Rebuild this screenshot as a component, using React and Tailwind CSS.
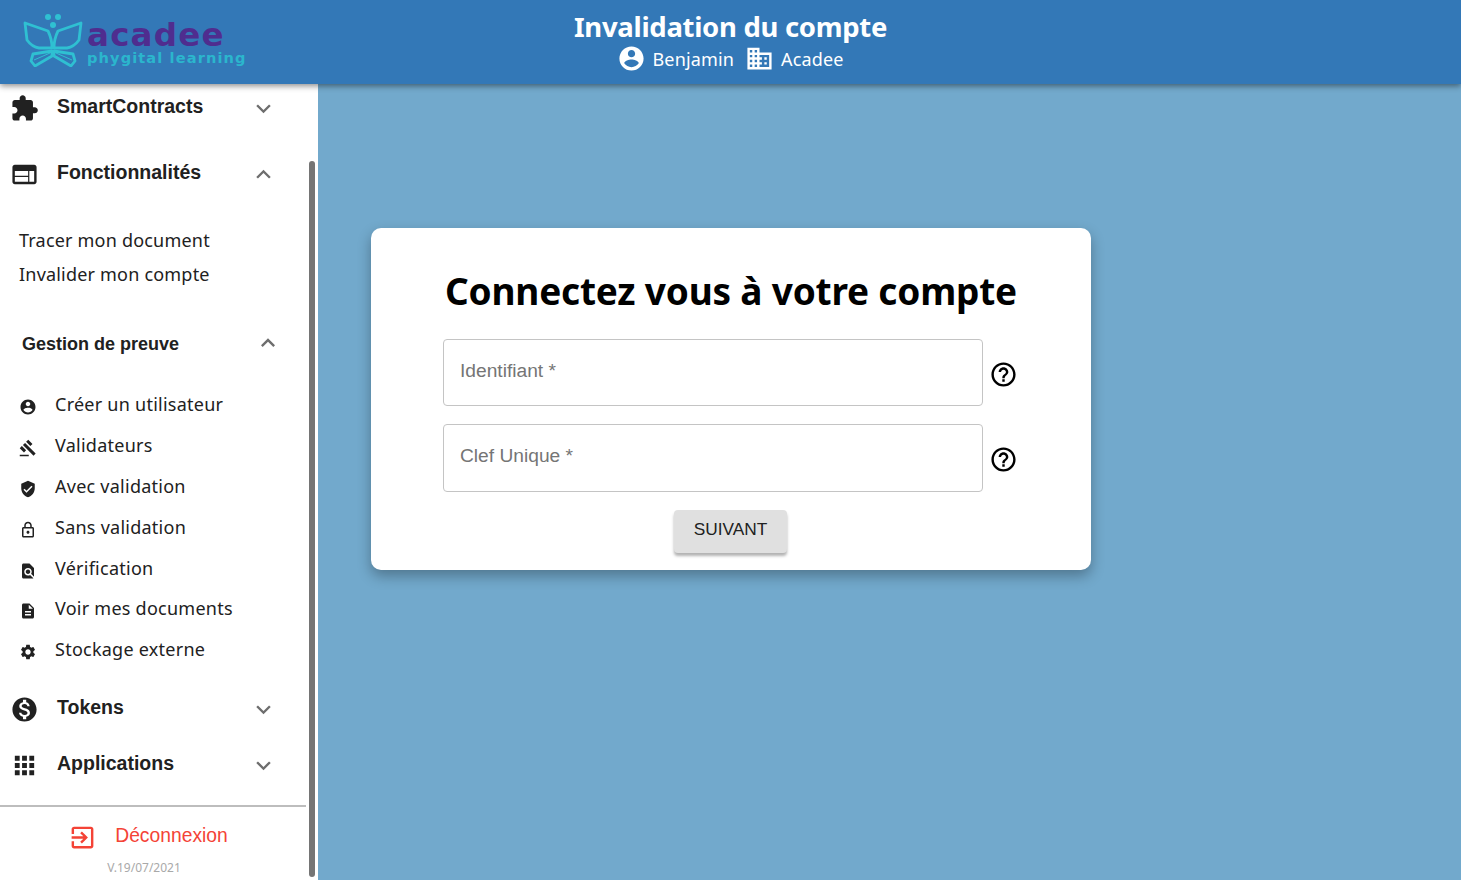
import React from 'react';

const icons = {
  extension: 'M20.5 11H19V7c0-1.1-.9-2-2-2h-4V3.5C13 2.12 11.88 1 10.5 1S8 2.12 8 3.5V5H4c-1.1 0-1.99.9-1.99 2v3.8H3.5c1.49 0 2.7 1.21 2.7 2.7s-1.21 2.7-2.7 2.7H2V20c0 1.1.9 2 2 2h3.8v-1.5c0-1.49 1.21-2.7 2.7-2.7 1.49 0 2.7 1.21 2.7 2.7V22H17c1.1 0 2-.9 2-2v-4h1.5c1.38 0 2.5-1.12 2.5-2.5S21.88 11 20.5 11z',
  web: 'M20 4H4c-1.1 0-1.99.9-1.99 2L2 18c0 1.1.9 2 2 2h16c1.1 0 2-.9 2-2V6c0-1.1-.9-2-2-2zm-5 14H4v-4h11v4zm0-5H4V9h11v4zm5 5h-4V9h4v9z',
  more: 'M16.59 8.59L12 13.17 7.41 8.59 6 10l6 6 6-6z',
  less: 'M12 8l-6 6 1.41 1.41L12 10.83l4.59 4.58L18 14z',
  account: 'M12 2C6.48 2 2 6.48 2 12s4.48 10 10 10 10-4.48 10-10S17.52 2 12 2zm0 3c1.66 0 3 1.34 3 3s-1.34 3-3 3-3-1.34-3-3 1.34-3 3-3zm0 14.2c-2.5 0-4.71-1.28-6-3.22.03-1.99 4-3.08 6-3.08 1.99 0 5.97 1.09 6 3.08-1.29 1.94-3.5 3.22-6 3.22z',
  gavel: 'M1 21h12v2H1zM5.245 8.07l2.83-2.827 14.14 14.142-2.828 2.828zM12.317 1l5.657 5.656-2.83 2.83-5.654-5.66zM3.825 9.485l5.657 5.657-2.828 2.828-5.657-5.657z',
  verified: 'M12 1L3 5v6c0 5.55 3.84 10.74 9 12 5.16-1.26 9-6.45 9-12V5l-9-4zm-2 16l-4-4 1.41-1.41L10 14.17l6.59-6.59L18 9l-8 8z',
  lock: 'M18 8h-1V6c0-2.76-2.24-5-5-5S7 3.24 7 6v2H6c-1.1 0-2 .9-2 2v10c0 1.1.9 2 2 2h12c1.1 0 2-.9 2-2V10c0-1.1-.9-2-2-2zM9 6c0-1.66 1.34-3 3-3s3 1.34 3 3v2H9V6zm9 14H6V10h12v10zm-6-3c1.1 0 2-.9 2-2s-.9-2-2-2-2 .9-2 2 .9 2 2 2z',
  find: 'M20 19.59V8l-6-6H6c-1.1 0-1.99.9-1.99 2L4 20c0 1.1.89 2 1.99 2H18c.45 0 .85-.15 1.19-.4l-4.43-4.43c-.8.52-1.74.83-2.76.83-2.76 0-5-2.24-5-5s2.24-5 5-5 5 2.24 5 5c0 1.02-.31 1.96-.83 2.75L20 19.59zM9 13c0 1.66 1.34 3 3 3s3-1.34 3-3-1.34-3-3-3-3 1.34-3 3z',
  description: 'M14 2H6c-1.1 0-1.99.9-1.99 2L4 20c0 1.1.89 2 1.99 2H18c1.1 0 2-.9 2-2V8l-6-6zm2 16H8v-2h8v2zm0-4H8v-2h8v2zm-3-5V3.5L18.5 9H13z',
  settings: 'M19.14 12.94c.04-.3.06-.61.06-.94 0-.32-.02-.64-.07-.94l2.03-1.58c.18-.14.23-.41.12-.61l-1.92-3.32c-.12-.22-.37-.29-.59-.22l-2.39.96c-.5-.38-1.03-.7-1.62-.94l-.36-2.54c-.04-.24-.24-.41-.48-.41h-3.84c-.24 0-.43.17-.47.41l-.36 2.54c-.59.24-1.13.57-1.62.94l-2.39-.96c-.22-.08-.47 0-.59.22L2.74 8.87c-.12.21-.08.47.12.61l2.03 1.58c-.05.3-.09.63-.09.94s.02.64.07.94l-2.03 1.58c-.18.14-.23.41-.12.61l1.92 3.32c.12.22.37.29.59.22l2.39-.96c.5.38 1.03.7 1.62.94l.36 2.54c.05.24.24.41.48.41h3.84c.24 0 .44-.17.47-.41l.36-2.54c.59-.24 1.13-.56 1.62-.94l2.39.96c.22.08.47 0 .59-.22l1.92-3.32c.12-.22.07-.47-.12-.61l-2.01-1.58zM12 15.6c-1.98 0-3.6-1.62-3.6-3.6s1.62-3.6 3.6-3.6 3.6 1.62 3.6 3.6-1.62 3.6-3.6 3.6z',
  money: 'M12 2C6.48 2 2 6.48 2 12s4.48 10 10 10 10-4.48 10-10S17.52 2 12 2zm1.41 16.09V20h-2.67v-1.93c-1.71-.36-3.16-1.46-3.27-3.4h1.96c.1 1.05.82 1.87 2.65 1.87 1.96 0 2.4-.98 2.4-1.59 0-.83-.44-1.61-2.67-2.14-2.48-.6-4.18-1.62-4.18-3.67 0-1.72 1.39-2.84 3.11-3.21V4h2.67v1.95c1.86.45 2.79 1.86 2.85 3.39H14.3c-.05-1.11-.64-1.87-2.22-1.87-1.5 0-2.4.68-2.4 1.64 0 .84.65 1.39 2.67 1.91s4.18 1.39 4.18 3.91c-.01 1.83-1.38 2.83-3.12 3.16z',
  apps: 'M4 8h4V4H4v4zm6 12h4v-4h-4v4zm-6 0h4v-4H4v4zm0-6h4v-4H4v4zm6 0h4v-4h-4v4zm6-10v4h4V4h-4zm-6 4h4V4h-4v4zm6 6h4v-4h-4v4zm0 6h4v-4h-4v4z',
  exit: 'M10.09 15.59L11.5 17l5-5-5-5-1.41 1.41L12.67 11H3v2h9.67l-2.58 2.59zM19 3H5c-1.11 0-2 .9-2 2v4h2V5h14v14H5v-4H3v4c0 1.1.89 2 2 2h14c1.1 0 2-.9 2-2V5c0-1.1-.9-2-2-2z',
  help: 'M11 18h2v-2h-2v2zm1-16C6.48 2 2 6.48 2 12s4.48 10 10 10 10-4.48 10-10S17.52 2 12 2zm0 18c-4.41 0-8-3.59-8-8s3.59-8 8-8 8 3.59 8 8-3.59 8-8 8zm0-14c-2.21 0-4 1.79-4 4h2c0-1.1.9-2 2-2s2 .9 2 2c0 2-3 1.75-3 5h2c0-2.25 3-2.5 3-5 0-2.21-1.79-4-4-4z',
  domain: 'M12 7V3H2v18h20V7H12zM6 19H4v-2h2v2zm0-4H4v-2h2v2zm0-4H4V9h2v2zm0-4H4V5h2v2zm4 12H8v-2h2v2zm0-4H8v-2h2v2zm0-4H8V9h2v2zm0-4H8V5h2v2zm10 12h-8v-2h2v-2h-2v-2h2v-2h-2V9h8v10zm-2-8h-2v2h2v-2zm0 4h-2v2h2v-2z',
};

function Icon({ name, className }) {
  return (
    <svg viewBox="0 0 24 24" fill="currentColor" className={className}>
      <path d={icons[name]} />
    </svg>
  );
}

function Logo() {
  return (
    <div className="flex items-start ml-[23px] mt-[13px]">
      <svg viewBox="0 0 60 54" className="w-[60px] h-[54px] shrink-0" fill="none" stroke="#2fc0d2" strokeWidth="2.8" strokeLinejoin="round">
        <circle cx="25" cy="4" r="3" fill="#2fc0d2" stroke="none" />
        <circle cx="35" cy="4" r="3" fill="#2fc0d2" stroke="none" />
        <circle cx="30" cy="12" r="3" fill="#2fc0d2" stroke="none" />
        <path d="M2 10 L25 18 Q29 26 29 35 L16 35 Q9 34 4 27 Z" />
        <path d="M58 10 L35 18 Q31 26 31 35 L44 35 Q51 34 56 27 Z" />
        <path d="M29 38 L10 41 L8 48 L12 53 L29 43 Z" />
        <path d="M31 38 L50 41 L52 48 L48 53 L31 43 Z" />
        <path d="M11 47 L27 40 M49 47 L33 40" strokeWidth="1" />
      </svg>
      <div className="ml-[4px] pt-[7px]">
        <div className="font-['DejaVu_Sans'] font-bold text-[32.5px] leading-[30px] tracking-[1.2px] text-[#4f2d8f]">acadee</div>
        <div className="font-['DejaVu_Sans'] font-bold text-[14.6px] leading-[16px] tracking-[1.1px] text-[#2bb6cd]">phygital learning</div>
      </div>
    </div>
  );
}

function Header() {
  return (
    <header className="relative z-10 h-[84px] shrink-0 bg-[#3378b7] grid grid-cols-[1fr_auto_1fr] shadow-[0_2px_6px_rgba(0,0,0,0.45)]">
      <Logo />
      <div className="flex flex-col items-center text-white font-['Noto_Sans',sans-serif] pt-[8px]">
        <h1 className="text-[27.5px] leading-[38px] font-bold tracking-[-0.3px]">Invalidation du compte</h1>
        <div className="flex items-center text-[18px] leading-[24px] tracking-[0.15px] mt-[-2px]">
          <Icon name="account" className="w-[29px] h-[29px]" />
          <span className="ml-[6px]">Benjamin</span>
          <Icon name="domain" className="w-[29px] h-[29px] ml-[11px]" />
          <span className="ml-[7px]">Acadee</span>
        </div>
      </div>
      <div />
    </header>
  );
}

function Section({ icon, label, open, className }) {
  return (
    <div className={`flex items-center h-[36px] ${className}`}>
      <Icon name={icon} className="w-[29px] h-[29px] ml-[10px] text-[#212121] shrink-0" />
      <span className="ml-[18px] flex-1 font-['Liberation_Sans',sans-serif] font-bold text-[19.5px] leading-[24px] text-[#212121] mt-[-5px]">{label}</span>
      <Icon name={open ? 'less' : 'more'} className="w-[29px] h-[29px] mr-[28px] text-[#6e6e6e]" />
    </div>
  );
}

const proofItems = [
  ['account', 'Créer un utilisateur'],
  ['gavel', 'Validateurs'],
  ['verified', 'Avec validation'],
  ['lock', 'Sans validation'],
  ['find', 'Vérification'],
  ['description', 'Voir mes documents'],
  ['settings', 'Stockage externe'],
];

function Sidebar() {
  return (
    <aside className="w-[318px] shrink-0 bg-white flex overflow-hidden">
      <div className="w-[306px] flex flex-col">
        <Section icon="extension" label="SmartContracts" className="mt-[6px]" />
        <Section icon="web" label="Fonctionnalités" open className="mt-[30px]" />
        <div className="mt-[31px] pl-[19px] font-['Noto_Sans',sans-serif] text-[18px] leading-[34px] tracking-[0.2px] text-[#212121]">
          <div>Tracer mon document</div>
          <div>Invalider mon compte</div>
        </div>
        <div className="flex items-center h-[32px] mt-[37px] pl-[22px] pr-[24px]">
          <span className="flex-1 font-['Liberation_Sans',sans-serif] font-bold text-[18px] leading-[24px] text-[#212121]">Gestion de preuve</span>
          <Icon name="less" className="w-[28px] h-[28px] text-[#6e6e6e] mt-[-3px]" />
        </div>
        <div className="mt-[30px] flex flex-col gap-[12.9px]">
          {proofItems.map(([icon, label]) => (
            <div key={label} className="flex items-center h-[28px]">
              <Icon name={icon} className="w-[18px] h-[18px] ml-[19px] text-[#212121] mt-[6px]" />
              <span className="ml-[18px] font-['Noto_Sans',sans-serif] text-[18px] leading-[28px] tracking-[0.25px] text-[#212121]">{label}</span>
            </div>
          ))}
        </div>
        <Section icon="money" label="Tokens" className="mt-[28px]" />
        <Section icon="apps" label="Applications" className="mt-[20px]" />
        <div className="mt-[22px] border-t-2 border-[#bdbdbd] flex flex-col items-center">
          <div className="flex items-center mt-[15px] h-[30px] pr-[10px]">
            <Icon name="exit" className="w-[29px] h-[29px] text-[#f44336]" />
            <span className="ml-[18px] font-['Liberation_Sans',sans-serif] text-[19.3px] leading-[24px] text-[#f44336] mt-[-2px]">Déconnexion</span>
          </div>
          <div className="mt-[8px] pr-[18px] font-['Noto_Sans',sans-serif] text-[12px] leading-[16px] text-[#a9a9a9]">V.19/07/2021</div>
        </div>
      </div>
      <div className="flex-1 pt-[77px] pb-[3px] pl-[3px]">
        <div className="w-[6px] h-full rounded-full bg-[#757575]" />
      </div>
    </aside>
  );
}

function Field({ label, className, inputClassName }) {
  return (
    <div className={`flex items-center ${className}`}>
      <input
        placeholder={label}
        className={`w-[540px] h-full rounded-[4px] border border-[#c4c4c4] pl-[16px] font-['Liberation_Sans',sans-serif] text-[19.2px] placeholder:text-[#757575] outline-none ${inputClassName}`}
      />
      <Icon name="help" className="w-[29px] h-[29px] ml-[6px] mt-[3px] text-black" />
    </div>
  );
}

function LoginCard() {
  return (
    <section className="ml-[53px] mt-[144px] w-[720px] h-[342px] bg-white rounded-[10px] shadow-[0_6px_14px_rgba(0,0,0,0.3)] pl-[72px] flex flex-col">
      <h2 className="mt-[38px] w-[576px] text-center font-['Noto_Sans',sans-serif] font-bold text-[37px] leading-[50px] text-black tracking-[-0.2px]">
        Connectez vous à votre compte
      </h2>
      <Field label="Identifiant *" className="mt-[23px] h-[67px]" inputClassName="pb-[4px]" />
      <Field label="Clef Unique *" className="mt-[18px] h-[68px]" inputClassName="pb-[5px]" />
      <button className="self-start ml-[231px] mt-[18px] w-[113px] h-[43px] rounded-[4px] bg-[#e0e0e0] shadow-[0_3px_3px_rgba(0,0,0,0.3)] font-['Liberation_Sans',sans-serif] text-[17.3px] text-[#212121] pb-[4px]">
        SUIVANT
      </button>
    </section>
  );
}

export default function App() {
  return (
    <div className="h-[880px] flex flex-col overflow-hidden bg-[#72a9cc]">
      <Header />
      <div className="flex-1 flex min-h-0">
        <Sidebar />
        <main className="flex-1">
          <LoginCard />
        </main>
      </div>
    </div>
  );
}
